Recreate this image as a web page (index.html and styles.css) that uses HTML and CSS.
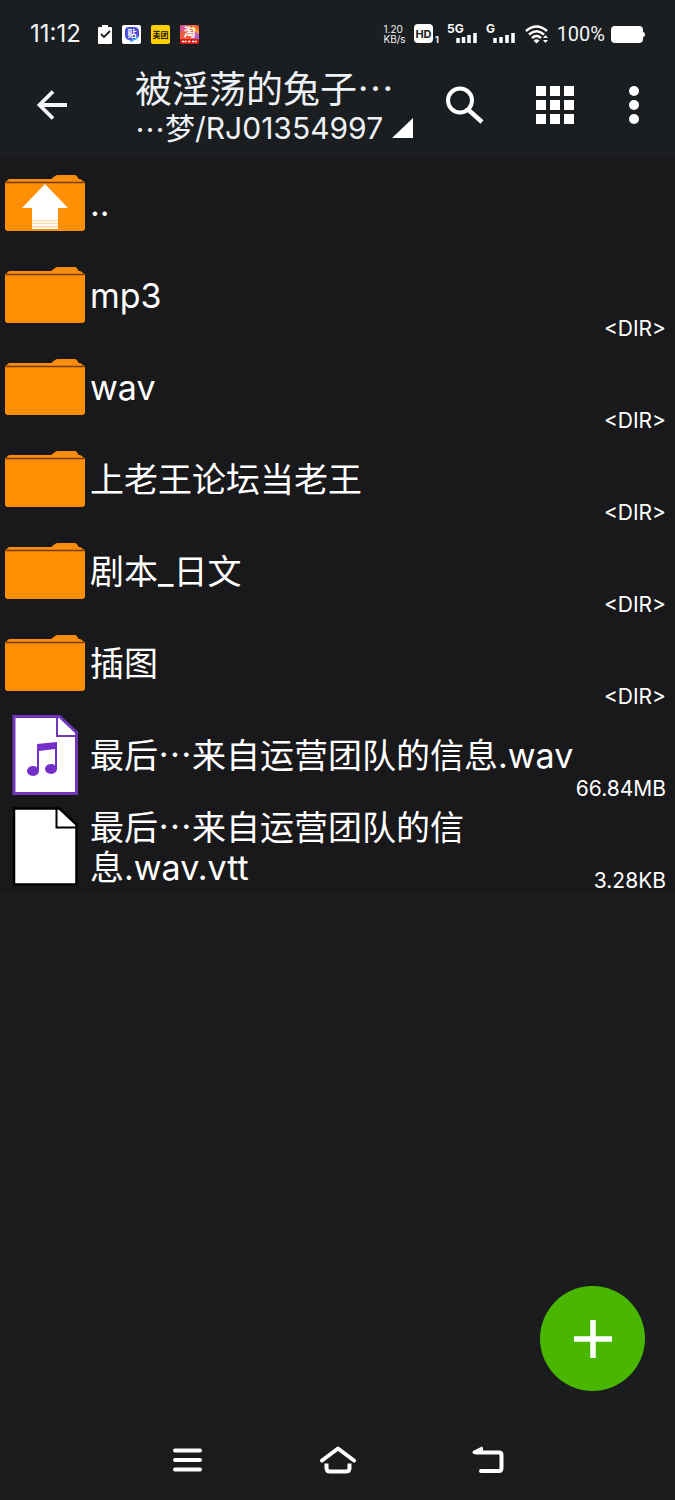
FILE: index.html
```html
<!DOCTYPE html>
<html lang="zh-CN">
<head>
<meta charset="utf-8">
<meta name="viewport" content="width=device-width, initial-scale=1">
<title>RJ01354997</title>
<link rel="stylesheet" href="styles.css">
</head>
<body>
<svg class="defs" aria-hidden="true">
  <symbol id="folder" viewBox="0 0 80 58">
    <path d="M2 10V7Q2 4 5 4H46L50 1Q51 0 53 0H70Q72 0 73 3L74 4Q78 4 78 8V10Z" fill="#f98c10"/>
    <rect y="6" width="80" height="50" rx="3" fill="#ff8f05"/>
    <path d="M1 7.500H79" stroke="#713c08" stroke-width="1.500"/>
  </symbol>
</svg>

<header class="top">
  <div class="status">
    <span class="clock">11:12</span>
    <svg class="note-icon" width="14" height="19" viewBox="0 0 14 19" aria-hidden="true"><path d="M1 2H4V0H10V2H13Q14 2 14 3V18Q14 19 13 19H1Q0 19 0 18V3Q0 2 1 2Z" fill="#fff"/><path d="M3 9L6 12L12 6" fill="none" stroke="#1a1d1f" stroke-width="1.800"/></svg>
    <svg class="note-icon" width="19" height="19" viewBox="0 0 19 19" aria-hidden="true"><rect width="19" height="19" rx="2" fill="#fff"/><path d="M7 2H12Q17 2 17 7V10Q17 14 12 15L9 17L8 15Q3 15 3 10V6Q3 2 7 2Z" fill="#4a48d6"/><path d="M16 11Q14 15 10 15L9 17" fill="none" stroke="#36b4ee" stroke-width="1.500"/><text x="10" y="12" text-anchor="middle" font-size="9" font-weight="700" fill="#fff">贴</text></svg>
    <svg class="note-icon" width="19" height="19" viewBox="0 0 19 19" aria-hidden="true"><rect width="19" height="19" rx="2" fill="#ffd000"/><text x="9.500" y="13" text-anchor="middle" font-size="8" font-weight="700" fill="#181512">美团</text></svg>
    <svg class="note-icon" width="19" height="19" viewBox="0 0 19 19" aria-hidden="true"><rect width="19" height="19" rx="2" fill="#ef5c3b"/><path d="M0 2Q0 0 2 0H8L0 9Z" fill="#d75495"/><path d="M13 0L19 6V12L11 4Z" fill="#ff9a2e"/><path d="M14 6L19 9V14H12Z" fill="#b563bb"/><path d="M0 14H19V17Q19 19 17 19H2Q0 19 0 17Z" fill="#d91c12"/><text x="9.500" y="12" text-anchor="middle" font-size="12" font-weight="700" fill="#fff">淘</text><path d="M2 16.500H7M8 16.500H11M12 16.500H17" stroke="#fff" stroke-width="1.500" stroke-dasharray="2 .6"/></svg>
    <span class="speed">1.20<br>KB/s</span>
    <svg class="hd" width="26" height="20" viewBox="0 0 26 20" aria-hidden="true"><rect y="0" width="19" height="19" rx="4" fill="#fff"/><text x="9.500" y="13.500" text-anchor="middle" font-size="11" font-weight="700" fill="#1a1d1f">HD</text><text x="21" y="19" font-size="9" font-weight="700" fill="#fff">1</text></svg>
    <svg class="signal" width="32" height="20" viewBox="0 0 32 20" aria-hidden="true"><text x="0" y="9" font-size="12" font-weight="700" fill="#fff">5G</text><path d="M11 14V19M16.500 13V19M22 11V19M28 9V19" stroke="#fff" stroke-width="3.500"/></svg>
    <svg class="signal" width="32" height="20" viewBox="0 0 32 20" aria-hidden="true"><text x="0" y="9" font-size="12" font-weight="700" fill="#fff">G</text><path d="M9 14V19M15 13V19M21 11V19M27 9V19" stroke="#fff" stroke-width="3.500"/></svg>
    <svg class="wifi" width="24" height="19" viewBox="0 0 24 19" aria-hidden="true"><g fill="none" stroke="#fff" stroke-width="2.500"><path d="M1 6Q11.500 -3 22 6"/><path d="M4 9.500Q11.500 3 19 9.500"/><path d="M7 13Q11.500 9 16 13"/></g><path d="M8.500 15.500Q11.500 13 14.500 15.500L11.500 18.500Z" fill="#fff"/><path d="M18 13L20.500 10L23 13ZM18 15L20.500 18L23 15Z" fill="#fff"/></svg>
    <span class="percent">100%</span>
    <svg class="battery" width="34" height="17" viewBox="0 0 34 17" aria-hidden="true"><rect width="32" height="17" rx="4" fill="#fff"/><path d="M32 6Q34 6 34 8.500T32 11Z" fill="#fff"/></svg>
  </div>

  <div class="toolbar">
    <button class="back" type="button" aria-label="返回"><svg width="31" height="30" viewBox="0 0 31 30"><path d="M30 15H3M16 1.500L2.500 15L16 28.500" fill="none" stroke="#f3f5fa" stroke-width="3.800"/></svg></button>
    <button class="path" type="button">
      <span class="title">被淫荡的兔子<span class="dots">…</span></span>
      <span class="subtitle"><span class="dots">…</span>梦/RJ01354997<svg class="corner" width="21" height="20" viewBox="0 0 21 20" aria-hidden="true"><path d="M0 20L21 0V20Z" fill="#fff"/></svg></span>
    </button>
    <button class="action" type="button" aria-label="搜索"><svg width="38" height="38" viewBox="0 0 38 38"><circle cx="14" cy="14.500" r="12" fill="none" stroke="#fff" stroke-width="4"/><path d="M22.500 24L36 36" stroke="#fff" stroke-width="4.500"/></svg></button>
    <button class="action" type="button" aria-label="视图"><svg width="38" height="38" viewBox="0 0 38 38"><path d="M0 5H10M14 5H24M28 5H38M0 19H10M14 19H24M28 19H38M0 33H10M14 33H24M28 33H38" stroke="#fff" stroke-width="10"/></svg></button>
    <button class="more" type="button" aria-label="更多"><svg width="10" height="38" viewBox="0 0 10 38"><circle cx="5" cy="5" r="5" fill="#fff"/><circle cx="5" cy="19" r="5" fill="#fff"/><circle cx="5" cy="33" r="5" fill="#fff"/></svg></button>
  </div>
</header>

<main>
  <ul class="files">
    <li><a class="row" href="#up"><span class="icon"><svg width="80" height="58" viewBox="0 0 80 58"><use href="#folder"/><path d="M40 9L63 33H53V45H27V33H17Z" fill="#fff"/><path d="M27 45H53V54H27Z" fill="#ffd9a5"/><path d="M27 46H53V48H27ZM27 49H53V51H27ZM27 52H53V54H27Z" fill="#fff8ee"/></svg></span><span class="name">..</span></a></li>
    <li><a class="row" href="#mp3"><span class="icon"><svg width="80" height="58"><use href="#folder"/></svg></span><span class="name">mp3</span><span class="size">&lt;DIR&gt;</span></a></li>
    <li><a class="row" href="#wav"><span class="icon"><svg width="80" height="58"><use href="#folder"/></svg></span><span class="name">wav</span><span class="size">&lt;DIR&gt;</span></a></li>
    <li><a class="row" href="#forum"><span class="icon"><svg width="80" height="58"><use href="#folder"/></svg></span><span class="name">上老王论坛当老王</span><span class="size">&lt;DIR&gt;</span></a></li>
    <li><a class="row" href="#script"><span class="icon"><svg width="80" height="58"><use href="#folder"/></svg></span><span class="name">剧本_日文</span><span class="size">&lt;DIR&gt;</span></a></li>
    <li><a class="row" href="#art"><span class="icon"><svg width="80" height="58"><use href="#folder"/></svg></span><span class="name">插图</span><span class="size">&lt;DIR&gt;</span></a></li>
    <li><a class="row" href="#audio"><span class="icon"><svg width="66" height="82" viewBox="0 0 66 82"><path d="M2 1.500H47.500L64.500 17.500V78.500H2Z" fill="#fff" stroke="#7137b8" stroke-width="3"/><path d="M45 1V21H65" fill="none" stroke="#7137b8" stroke-width="2"/><path d="M25 29L45 27V54H43V34L27 36V56H25Z" fill="#7430c8"/><ellipse cx="21" cy="56" rx="6" ry="5" fill="#7430c8"/><ellipse cx="39" cy="54" rx="6" ry="5" fill="#7430c8"/></svg></span><span class="name">最后<span class="dots">…</span>来自运营团队的信息.wav</span><span class="size">66.84MB</span></a></li>
    <li><a class="row" href="#subtitle"><span class="icon"><svg width="66" height="82" viewBox="0 0 66 82"><path d="M2 1.500H47.500L64.500 17.500V77.500H2Z" fill="#fff" stroke="#000" stroke-width="2.500"/><path d="M44.500 1V20.500H65" fill="none" stroke="#000" stroke-width="2"/></svg></span><span class="name">最后<span class="dots">…</span>来自运营团队的信息.wav.vtt</span><span class="size">3.28KB</span></a></li>
  </ul>
</main>

<button class="fab" type="button" aria-label="新建"><svg width="38" height="38" viewBox="0 0 38 38"><path d="M0 19H38M19 0V38" stroke="#fff" stroke-width="5.500"/></svg></button>

<nav class="navbar" aria-label="系统导航">
  <button type="button" aria-label="最近任务"><svg width="30" height="28" viewBox="0 0 30 28"><path d="M2 4.500H27M2 14H27M2 23.500H27" stroke="#fff" stroke-width="4" stroke-linecap="round"/></svg></button>
  <button type="button" aria-label="主屏幕"><svg width="36" height="28" viewBox="0 0 36 28"><g fill="none" stroke="#fff" stroke-width="4" stroke-linecap="round" stroke-linejoin="round"><path d="M2 14.500L18 2.500L34 14.500"/><path d="M6.500 17.500V22Q6.500 25.500 10 25.500H26Q29.500 25.500 29.500 22V17.500" stroke-linecap="butt"/></g></svg></button>
  <button type="button" aria-label="返回"><svg width="32" height="28" viewBox="0 0 32 28"><path d="M4 6.500H27Q29.500 6.500 29.500 9V22Q29.500 25 27 25H9" fill="none" stroke="#fff" stroke-width="4" stroke-linecap="round"/><path d="M1 5L10 .5Q11.500 1 11 8H2Q-.5 7 1 5Z" fill="#fff"/></svg></button>
</nav>
</body>
</html>
```
FILE: styles.css
```css
* {
  box-sizing: border-box;
}

body {
  margin: 0;
  min-height: 100vh;
  display: flex;
  flex-direction: column;
  background: #1a1c1e;
  color: #fff;
  font-family: Inter, "Noto Sans CJK SC", sans-serif;
}

button {
  margin: 0;
  padding: 0;
  border: 0;
  background: none;
  color: inherit;
  font: inherit;
  display: flex;
  align-items: center;
  justify-content: center;
  cursor: pointer;
}

svg {
  display: block;
  flex: none;
  overflow: visible;
}

.defs {
  display: none;
}

.dots {
  font-family: "Noto Sans CJK SC", sans-serif;
  line-height: 1;
}

.top {
  background: #1a1e20;
}

.status {
  display: flex;
  align-items: center;
  height: 54px;
  padding: 14px 30px 0;
  color: #f1f3f5;
}

.clock {
  font-size: 24px;
  line-height: 28px;
  margin-right: 7px;
}

.note-icon {
  margin-left: 10px;
}

.speed {
  margin-left: auto;
  font-size: 10px;
  line-height: 10px;
}

.hd {
  margin-left: 8px;
}

.signal {
  margin-left: 7px;
}

.wifi {
  margin-left: 7px;
}

.percent {
  margin: 0 6px 0 8px;
  font-family: Roboto, sans-serif;
  font-size: 20px;
  line-height: 28px;
}

.toolbar {
  display: flex;
  height: 102px;
  padding-right: 8px;
  color: #eef1f5;
}

.back {
  width: 105px;
}

.path {
  flex: 1;
  min-width: 0;
  flex-direction: column;
  align-items: flex-start;
  padding: 5px 0 0 30px;
  white-space: nowrap;
}

.title {
  font-size: 37px;
  line-height: 40px;
}

.subtitle {
  display: flex;
  align-items: center;
  font-size: 30px;
  line-height: 36px;
}

.corner {
  margin-left: 9px;
}

.action {
  width: 90px;
}

.more {
  width: 67px;
}

main {
  background: #19191b;
}

.files {
  list-style: none;
  margin: 0;
  padding: 2px 0 0;
}

.row {
  display: flex;
  align-items: center;
  min-height: 92px;
  padding-right: 9px;
  color: inherit;
  text-decoration: none;
}

.icon {
  display: flex;
  justify-content: center;
  flex: none;
  width: 90px;
}

.name {
  flex: 1;
  min-width: 0;
  font-size: 34px;
  line-height: 40px;
}

.size {
  align-self: flex-end;
  margin-left: -8px;
  padding-bottom: 1px;
  font-size: 21px;
  line-height: 24px;
}

.fab {
  position: fixed;
  right: 30px;
  bottom: 109px;
  width: 105px;
  height: 105px;
  border-radius: 50%;
  background: #49b700;
}

.navbar {
  display: grid;
  grid-template-columns: repeat(3, 150px);
  justify-content: center;
  height: 80px;
  margin-top: auto;
}
```
